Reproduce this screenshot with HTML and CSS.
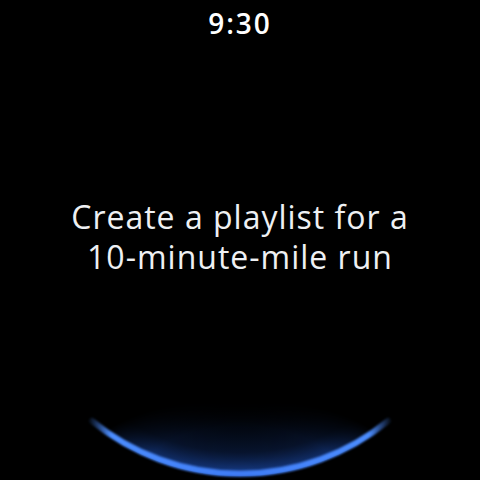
FILE: index.html
```html
<!DOCTYPE html>
<html>
<head>
<meta charset="utf-8">
<link rel="stylesheet" href="styles.css">
</head>
<body>
<div class="screen">
  <div class="time">9:30</div>
  <div class="prompt">Create a playlist for a<br>10-minute-mile run</div>
  <svg class="glow" width="480" height="480" viewBox="0 0 480 480">
    <defs>
      <radialGradient id="inner" cx="240" cy="240" r="236" gradientUnits="userSpaceOnUse">
        <stop offset="0.68" stop-color="#0b1f4a" stop-opacity="0"/>
        <stop offset="0.9" stop-color="#12306e" stop-opacity="0.45"/>
        <stop offset="1" stop-color="#1d4fb5" stop-opacity="0.85"/>
      </radialGradient>
      <radialGradient id="mfade" cx="240" cy="470" r="160" gradientUnits="userSpaceOnUse" gradientTransform="translate(240 470) scale(1 0.45) translate(-240 -470)">
        <stop offset="0" stop-color="#fff" stop-opacity="1"/>
        <stop offset="0.6" stop-color="#fff" stop-opacity="0.8"/>
        <stop offset="1" stop-color="#fff" stop-opacity="0"/>
      </radialGradient>
      <mask id="m">
        <rect x="0" y="300" width="480" height="180" fill="url(#mfade)"/>
      </mask>
      <linearGradient id="arcg" x1="90" y1="0" x2="390" y2="0" gradientUnits="userSpaceOnUse">
        <stop offset="0" stop-color="#4c8dff" stop-opacity="0.1"/>
        <stop offset="0.07" stop-color="#4c8dff"/>
        <stop offset="0.5" stop-color="#3f7cf5"/>
        <stop offset="0.93" stop-color="#4c8dff"/>
        <stop offset="1" stop-color="#4c8dff" stop-opacity="0.1"/>
      </linearGradient>
      <filter id="blur" x="-10%" y="-10%" width="120%" height="120%">
        <feGaussianBlur stdDeviation="0.8"/>
      </filter>
    </defs>
    <g mask="url(#m)">
      <circle cx="240" cy="240" r="236" fill="url(#inner)"/>
    </g>
    <path d="M 92 421 A 234 234 0 0 0 388 421" fill="none" stroke="url(#arcg)" stroke-width="6" stroke-linecap="round" filter="url(#blur)"/>
  </svg>
</div>
</body>
</html>
```
FILE: styles.css
```css
html, body {
  margin: 0;
  padding: 0;
  background: #000;
}
.screen {
  position: relative;
  width: 480px;
  height: 480px;
  background: #000;
  display: flex;
  flex-direction: column;
  align-items: center;
  font-family: "Open Sans", "Roboto", sans-serif;
  color: #fff;
  overflow: hidden;
}
.time {
  margin-top: 5px;
  font-size: 28px;
  font-weight: 600;
  line-height: 36px;
  letter-spacing: 2px;
}
.prompt {
  margin-top: 156px;
  font-size: 32px;
  line-height: 40px;
  text-align: center;
  color: #eef0f3;
  font-weight: 400;
  letter-spacing: 1px;
}
.glow {
  position: absolute;
  left: 0;
  top: 0;
  pointer-events: none;
}
```
